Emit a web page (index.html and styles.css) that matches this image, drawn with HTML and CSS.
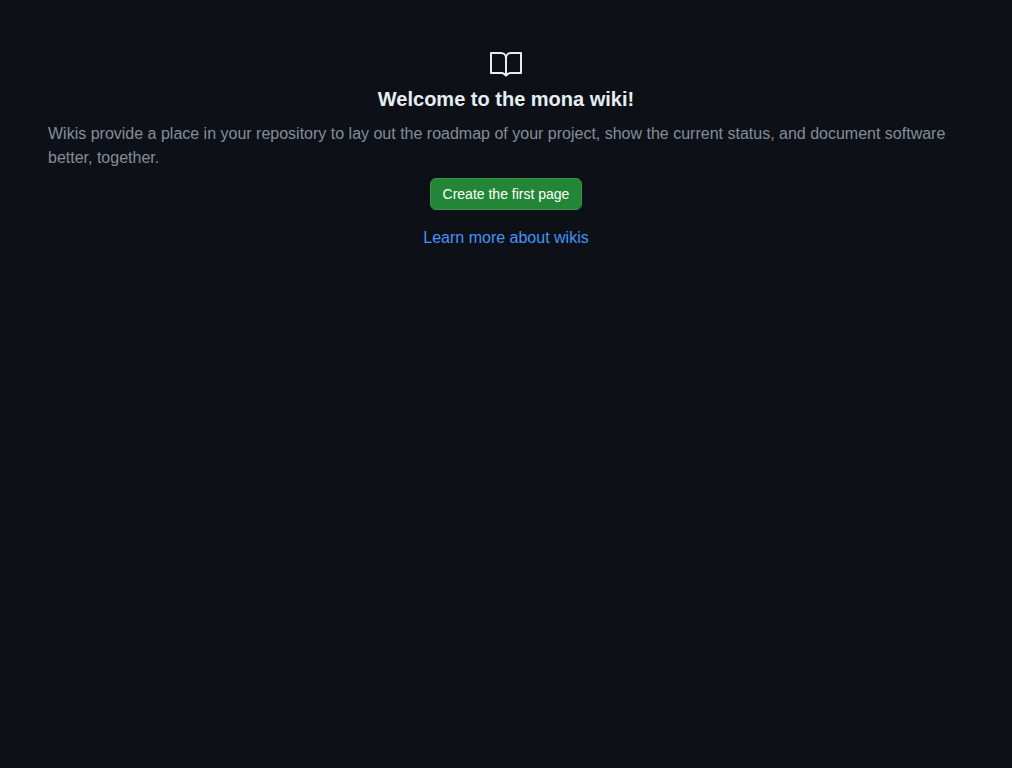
FILE: index.html
```html
<!DOCTYPE html>
<html lang="en">
<head>
  <meta charset="utf-8">
  <meta name="viewport" content="width=device-width, initial-scale=1">
  <title>Wiki</title>
  <link rel="stylesheet" href="styles.css">
</head>
<body>
  <main class="blankslate">
    <svg class="blankslate-icon" viewBox="0 0 24 24" width="36" height="36" aria-hidden="true">
      <path d="M0 3.75A.75.75 0 0 1 .75 3h7.497c1.566 0 2.945.8 3.751 2.014A4.495 4.495 0 0 1 15.75 3h7.5a.75.75 0 0 1 .75.75v15.063a.752.752 0 0 1-.755.75l-7.682-.052a3 3 0 0 0-2.142.878l-.89.891a.75.75 0 0 1-1.061 0l-.902-.901a2.996 2.996 0 0 0-2.121-.879H.75a.75.75 0 0 1-.75-.75Zm12.75 15.232a4.503 4.503 0 0 1 2.823-.971l6.927.047V4.5h-6.75a3 3 0 0 0-3 3ZM11.247 7.497a3 3 0 0 0-3-2.997H1.5V18h6.947c1.018 0 2.006.346 2.803.98Z"/>
    </svg>
    <h1 class="blankslate-heading">Welcome to the mona wiki!</h1>
    <p class="blankslate-text">Wikis provide a place in your repository to lay out the roadmap of your project, show the current status, and document software better, together.</p>
    <button class="blankslate-button" type="button">Create the first page</button>
    <a class="blankslate-link" href="#">Learn more about wikis</a>
  </main>
</body>
</html>
```
FILE: styles.css
```css
body {
  margin: 0;
  background: #0d1117;
  color: #e6edf3;
  font-family: "Liberation Sans", Arial, sans-serif;
  font-size: 16px;
  line-height: 24px;
}

.blankslate {
  display: flex;
  flex-direction: column;
  align-items: center;
  padding: 48px;
}

.blankslate-icon {
  width: 32px;
  height: 32px;
  fill: currentColor;
}

.blankslate-heading {
  margin: 4px 0;
  font-size: 20px;
  font-weight: 700;
  line-height: 30px;
}

.blankslate-text {
  margin: 4px 0 8px;
  color: #848d97;
}

.blankslate-button {
  box-sizing: border-box;
  height: 32px;
  margin-bottom: 16px;
  padding: 0 12px;
  border: 1px solid #38924a;
  border-radius: 6px;
  background: #238636;
  color: #ffffff;
  font: 14px/20px "Liberation Sans", Arial, sans-serif;
  cursor: pointer;
}

.blankslate-link {
  color: #4493f8;
  text-decoration: none;
}

.blankslate-link:hover {
  text-decoration: underline;
}
```
